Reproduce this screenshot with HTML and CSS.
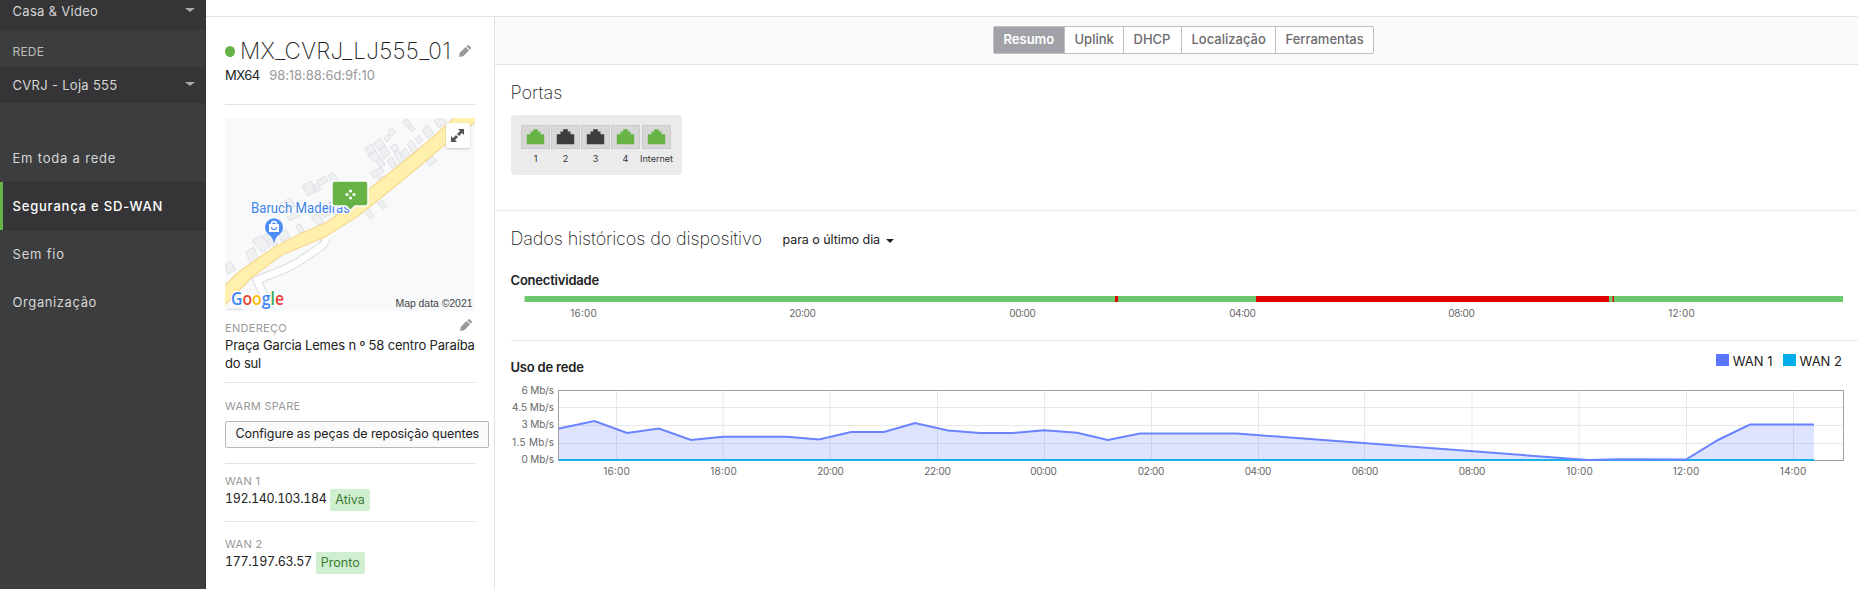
FILE: index.html
```html
<!DOCTYPE html>
<html lang="pt-BR">
<head>
<meta charset="utf-8">
<title>MX_CVRJ_LJ555_01</title>
<link rel="stylesheet" href="styles.css">
</head>
<body>
<div class="app">
  <nav class="sidebar">
    <div class="picker picker-org"><span class="t-org">Casa &amp; Video</span><i class="caret"></i></div>
    <div class="side-label"><span class="t-rede">REDE</span></div>
    <div class="picker picker-net"><span class="t-net">CVRJ - Loja 555</span><i class="caret"></i></div>
    <div class="menu">
      <a class="item"><span class="t-m1">Em toda a rede</span></a>
      <a class="item active"><span class="t-m2">Segurança e SD-WAN</span></a>
      <a class="item"><span class="t-m3">Sem fio</span></a>
      <a class="item"><span class="t-m4">Organização</span></a>
    </div>
  </nav>
  <div class="page">
    <div class="topbar"></div>
    <div class="content">
      <aside class="device">
        <section class="head">
          <div class="title-row">
            <i class="status"></i><h1 class="t-title">MX_CVRJ_LJ555_01</h1>
            <svg class="pencil" viewBox="0 0 12 12"><path d="M0 12l.8-4.200L6.600 2l3.400 3.400-5.800 5.800zM7.300 1.300L8.300.4q.9-.7 1.700 0l1.600 1.600q.7.8 0 1.700l-.9 1z"/></svg>
          </div>
          <div class="model"><span class="t-model">MX64</span><span class="t-mac">98:18:88:6d:9f:10</span></div>
        </section>
        <svg class="map" viewBox="0 0 250 193">
          <rect width="250" height="193" fill="#f8f9fb"/>
          <g fill="#eff0f2" stroke="#dfe1e4" stroke-width="1">
            <path d="M77 68l9-5 6 9-9 6zM87 68l5-3 4 6-5 4zM92 63l8-5 3 5-8 5zM103 58l5-4 5 8-5 3zM55 86l10-6 5 8-8 8zM62 99l10-5 3 4-10 5zM71 108l4-2 5 9-4 2zM27 123l9-6 9 11-8 6zM37 119l7-5 9 12-4 3zM54 116l7-5 4 8-8 5zM21 134l8-5 5 14-9 2zM0 147l5-4 6 8-8 5zM86 100l7-5 6 9-6 3zM93 91l7-5 6 10-7 4zM103 86l7-6 8 10-8 7zM137 91l5-3 7 10-4 3zM152 85l5-3 5 6-4 3zM200 41l6-4 6 6-8 5zM3 191h14v4H3z"/>
            <path d="M140 30l7-4 4 7-7 4zM149 25l6-5 5 8-6 5zM143 37l7-5 5 7-6 5zM151 44l5-4 4 7-4 3zM154 32l6-4 5 8-6 5zM145 55l11-6 3 5-10 6zM153 60l4-2 3 3-5 3zM162 43l5-4 5 8-5 3zM169 35l4-3 7 11-5 3zM176 34l4-4 6 8-4 3zM165 29l6-3 3 4-5 4zM159 20l4-4 3 4-4 4zM163 13l4-4 4 5-5 4zM178 4l4-3 4 5-4 3zM183 10l3-3 4 4-3 3zM182 26l4-4 7 9-5 4zM190 21l4-4 4 6-4 3zM197 12l6-5 6 9-6 4zM209 3l6-4 7 5-8 6z"/>
          </g>
          <path d="M101 119q-1 6-4 9L75 143 60 151 32 162l15 34" fill="none" stroke="#dfe1e4" stroke-width="9"/>
          <path d="M102 116q-1 9-5 12L75 143 60 151 32 162l15 34" fill="none" stroke="#fff" stroke-width="6.500"/>
          <path d="M-2 169L15 153l17-12 16-11 29-15 23-10 23-15 20-18 34-27 30-25L230-1h22v4L223 24l-33 28-33 27-24 19-33 21-43 18-30 22-29 30z" fill="#fff0ae" stroke="#f7d88e" stroke-width="1.200"/>
          <text class="poi" x="26" y="95" textLength="99" lengthAdjust="spacingAndGlyphs">Baruch Madeiras</text>
          <path d="M49 126q-1-7-6-10a9 9 0 1 1 12 0q-5 3-6 10z" fill="#4f8df5"/>
          <path d="M44 106h10v8H44z" fill="#fff"/><path d="M46.500 106a2.500 2.500 0 0 1 5 0" fill="none" stroke="#fff" stroke-width="1.300"/><path d="M46.500 109a2.500 2.500 0 0 0 5 0" fill="none" stroke="#4f8df5" stroke-width="1.200"/>
          <path d="M109.500 63h31q2.500 0 2.500 2.500v20q0 2.500-2.500 2.500H130l-4.500 4.500L121 88h-11.500q-2.500 0-2.500-2.500v-20q0-2.500 2.500-2.500z" fill="#67b346" stroke="#fff" stroke-width="1.500"/>
          <g fill="#fff"><circle cx="125.500" cy="73" r="1.600"/><circle cx="125.500" cy="80" r="1.600"/><circle cx="122" cy="76.500" r="1.600"/><circle cx="129" cy="76.500" r="1.600"/></g>
          <g class="expand"><rect x="221" y="5" width="24" height="25" rx="2.500" fill="#fff"/></g>
          <path d="M233 11h6v6l-2-2-3 3-2-2 3-3zM226 18l2 2 3-3 2 2-3 3 2 2h-6z" fill="#555"/>
          <text class="google" x="6" y="187" textLength="53" lengthAdjust="spacingAndGlyphs"><tspan fill="#4285f4">G</tspan><tspan fill="#ea4335">o</tspan><tspan fill="#fbbc05">o</tspan><tspan fill="#4285f4">g</tspan><tspan fill="#34a853">l</tspan><tspan fill="#ea4335">e</tspan></text>
          <text class="copy" x="170.500" y="189" textLength="77">Map data ©2021</text>
        </svg>
        <section class="address">
          <div class="label-row"><span class="label t-end">ENDEREÇO</span>
          <svg class="pencil" viewBox="0 0 12 12"><path d="M0 12l.8-4.200L6.600 2l3.400 3.400-5.800 5.800zM7.300 1.300L8.300.4q.9-.7 1.700 0l1.600 1.600q.7.8 0 1.700l-.9 1z"/></svg></div>
          <div class="addr"><span class="t-ad1">Praça Garcia Lemes n º 58 centro Paraíba</span><br><span class="t-ad2">do sul</span></div>
        </section>
        <section class="spare"><div class="label"><span class="t-warm">WARM SPARE</span></div><button class="config"><span class="t-conf">Configure as peças de reposição quentes</span></button></section>
        <section class="wan wan-one"><div class="label"><span class="t-w1">WAN 1</span></div><div class="ip"><span class="t-ip1">192.140.103.184</span><span class="badge b1"><span class="t-at">Ativa</span></span></div></section>
        <section class="wan wan-two"><div class="label"><span class="t-w2">WAN 2</span></div><div class="ip"><span class="t-ip2">177.197.63.57</span><span class="badge b2"><span class="t-pr">Pronto</span></span></div></section>
      </aside>
      <main class="main">
        <div class="tabbar"><div class="tabs">
          <a class="tab tab1 on"><span class="t-t1">Resumo</span></a><a class="tab tab2"><span class="t-t2">Uplink</span></a><a class="tab tab3"><span class="t-t3">DHCP</span></a><a class="tab tab4"><span class="t-t4">Localização</span></a><a class="tab tab5"><span class="t-t5">Ferramentas</span></a>
        </div></div>
        <section class="ports">
          <h2><span class="t-portas">Portas</span></h2>
          <div class="switch">
            <div class="port up"><svg viewBox="0 0 29 24"><path d="M5 9h4V6h3V3.500h5V6h3v3h4v11H5z"/></svg><span>1</span></div>
            <div class="port"><svg viewBox="0 0 29 24"><path d="M5 9h4V6h3V3.500h5V6h3v3h4v11H5z"/></svg><span>2</span></div>
            <div class="port"><svg viewBox="0 0 29 24"><path d="M5 9h4V6h3V3.500h5V6h3v3h4v11H5z"/></svg><span>3</span></div>
            <div class="port up"><svg viewBox="0 0 29 24"><path d="M5 9h4V6h3V3.500h5V6h3v3h4v11H5z"/></svg><span>4</span></div>
            <div class="port up uplink"><svg viewBox="0 0 29 24"><path d="M5 9h4V6h3V3.500h5V6h3v3h4v11H5z"/></svg><span>Internet</span></div>
          </div>
        </section>
        <section class="history">
          <div class="hist-head"><h2><span class="t-hist">Dados históricos do dispositivo</span></h2><span class="range"><span class="t-range">para o último dia</span><i class="caret dark"></i></span></div>
          <div class="connect">
            <h3><span class="t-con">Conectividade</span></h3>
            <svg class="conn" viewBox="511 292 1347 30">
              <rect x="524.500" y="296" width="1318.500" height="6" fill="#6dc86d"/>
              <path d="M1115 296h3v6h-3zM1256 296h353v6h-353zM1612.500 296h1.500v6h-1.500z" fill="#e00000"/>
              <g class="axis" text-anchor="middle"><text x="583.500" y="317" textLength="26.500">16:00</text><text x="802.500" y="317" textLength="26.500">20:00</text><text x="1022.500" y="317" textLength="26.500">00:00</text><text x="1242.500" y="317" textLength="26.500">04:00</text><text x="1461.500" y="317" textLength="26.500">08:00</text><text x="1681.500" y="317" textLength="26.500">12:00</text></g>
            </svg>
          </div>
          <div class="usage">
            <div class="usage-head"><h3><span class="t-uso">Uso de rede</span></h3>
              <div class="legend"><i class="key k1"></i><span class="t-l1">WAN 1</span><i class="key k2"></i><span class="t-l2">WAN 2</span></div></div>
            <svg class="chart" viewBox="511 380 1347 105">
              <path d="M559 407.500h1284M559 425.500h1284M559 443.500h1284M616.500 390v70M723 390v70M830 390v70M937.500 390v70M1044.500 390v70M1151.500 390v70M1258.500 390v70M1364.500 390v70M1472 390v70M1579 390v70M1686.500 390v70M1793.500 390v70" stroke="#e7e7e7" fill="none"/>
              <path d="M558 390.500h1286M558.500 390v71M558 460.500h1286M1843.500 390v71" stroke="#a0a0a0" fill="none"/>
              <path d="M559 428.500L594.500 421 627 433l32-4.500 32 11.500 32-3.200h64l32 2.700 32-7.500h33l31-9 33 7.500 32 2.500h33l31-2.800 33 2.600 31 7.200 32-6.500h97L1588 460l32-.7 66 .2 32-19.500 32-15.500h64V460H559z" fill="#5c77ff" fill-opacity=".2"/>
              <path d="M559 460h1255" stroke="#19afe8" stroke-width="2"/>
              <path d="M559 428.500L594.500 421 627 433l32-4.500 32 11.500 32-3.200h64l32 2.700 32-7.500h33l31-9 33 7.500 32 2.500h33l31-2.800 33 2.600 31 7.200 32-6.500h97L1588 460l32-.7 66 .2 32-19.500 32-15.500h64" fill="none" stroke="#6b83ff" stroke-width="2"/>
              <g class="axis" text-anchor="end"><text x="554" y="394" textLength="32.500">6 Mb/s</text><text x="554" y="411" textLength="42">4.5 Mb/s</text><text x="554" y="428" textLength="32.500">3 Mb/s</text><text x="554" y="446" textLength="42">1.5 Mb/s</text><text x="554" y="463" textLength="32.500">0 Mb/s</text></g>
              <g class="axis" text-anchor="middle"><text x="616.500" y="475" textLength="26.500">16:00</text><text x="723.500" y="475" textLength="26.500">18:00</text><text x="830.500" y="475" textLength="26.500">20:00</text><text x="937.500" y="475" textLength="26.500">22:00</text><text x="1043.500" y="475" textLength="26.500">00:00</text><text x="1151" y="475" textLength="26.500">02:00</text><text x="1258" y="475" textLength="26.500">04:00</text><text x="1365" y="475" textLength="26.500">06:00</text><text x="1472" y="475" textLength="26.500">08:00</text><text x="1579.500" y="475" textLength="26.500">10:00</text><text x="1686" y="475" textLength="26.500">12:00</text><text x="1793" y="475" textLength="26.500">14:00</text></g>
            </svg>
          </div>
        </section>
      </main>
    </div>
  </div>
</div>
</body>
</html>
```
FILE: styles.css
```css
* { box-sizing: border-box; }
body { margin: 0; background: #fff; color: #222; font: 13px/18px Inter, "Liberation Sans", sans-serif; overflow: hidden; }
h1, h2, h3 { margin: 0; }
span { white-space: nowrap; }
svg { display: block; }
.app { display: flex; height: 589px; }

.sidebar { width: 206px; flex: none; background: #3c3d3f; color: #d6d6d6; border-right: 1px solid #333436; }
.picker { background: #353537; display: flex; justify-content: space-between; padding: 0 10px 0 12.5px; letter-spacing: .3px; }
.picker-org { height: 30px; padding-top: 2px; }
.picker-net { height: 36px; padding-top: 9px; }
.caret { width: 0; height: 0; border: 5px solid transparent; border-top: 4.5px solid #aaa; border-bottom: 0; margin-top: 6px; }
.side-label { height: 37px; padding: 13px 12.5px 0; font-size: 12px; letter-spacing: .2px; color: #bcbcbc; }
.menu { padding-top: 31px; }
.item { display: block; height: 48px; padding: 15px 12.5px 0; letter-spacing: .8px; }
.t-m4 { letter-spacing: .6px; }
.active { background: #353537; color: #fff; border-left: 3px solid #67b346; padding-left: 9.5px; box-shadow: inset 0 1px #303032, inset 0 -1px #303032; font-weight: 500; letter-spacing: .8px; }

.page { flex: 1; display: flex; flex-direction: column; min-width: 0; }
.topbar { height: 17px; border-bottom: 1px solid #e2e2e3; }
.content { flex: 1; display: flex; }
.device { width: 289px; flex: none; border-right: 1px solid #e2e2e3; padding-left: 19px; }
.head { width: 250px; height: 88px; border-bottom: 1px solid #e2e2e3; padding-top: 20px; }
.title-row { display: flex; align-items: center; height: 28px; }
.status { width: 10px; height: 11px; border-radius: 50%; background: #67b346; margin-top: 1px; }
h1 { font-size: 22.5px; line-height: 28px; font-weight: 200; margin-left: 5px; width: 213px; letter-spacing: .3px; }
.pencil { width: 12px; height: 12px; fill: #999; margin-left: 6px; }
.model { height: 20px; display: flex; gap: 9.5px; padding-top: 1px; }
.t-model { letter-spacing: -.5px; }
.t-mac { color: #999; letter-spacing: -.05px; }
.map { width: 250px; height: 193px; margin-top: 13px; }
.poi { font: 14px Roboto, sans-serif; fill: #3d82e8; paint-order: stroke; stroke: #fff; stroke-width: 2px; }
.google { font: 600 18px "Open Sans", sans-serif; paint-order: stroke; stroke: #fff; stroke-width: 2px; }
.copy { font: 10.5px "Liberation Sans", sans-serif; fill: #444; }
.expand { filter: drop-shadow(0 1px 1px rgba(0,0,0,.2)); }
.label { font-size: 11px; line-height: 18px; color: #999; letter-spacing: .3px; }
.address { width: 250px; height: 72px; border-bottom: 1px solid #e2e2e3; padding-top: 8px; }
.label-row { display: flex; justify-content: space-between; height: 17px; padding-right: 3px; }
.addr { line-height: 18px; letter-spacing: -.17px; }
.spare { width: 250px; height: 81px; border-bottom: 1px solid #e2e2e3; padding-top: 14px; }
.config { font: inherit; font-size: 12.5px; letter-spacing: -.07px; color: #222; background: #fafafa; border: 1px solid #b8b8b8; border-radius: 2px; height: 27px; width: 264px; padding: 0 0 1px 9.5px; text-align: left; margin-top: 6px; display: block; }
.wan-one { width: 250px; height: 58px; border-bottom: 1px solid #e2e2e3; padding-top: 8px; }
.wan-two { padding-top: 13px; }
.ip { display: flex; height: 22px; line-height: 20px; font-variant-numeric: tabular-nums; margin-top: -1px; }
.t-ip1, .t-ip2 { font-size: 12.5px; letter-spacing: -.4px; }
.t-ip2 { letter-spacing: -.33px; }
.badge { background: #d0efd1; color: #3a7a32; border-radius: 2px; height: 22px; line-height: 21px; padding: 0 5px; margin-left: 4px; font-size: 12.5px; }

.main { flex: 1; min-width: 0; }
.tabbar { height: 48px; background: #fafafa; border-bottom: 1px solid #e2e2e3; padding: 9px 0 0 498px; }
.tabs { display: flex; width: 381px; height: 28px; border: 1px solid #bfbfbf; border-radius: 2px; background: #fff; color: #6b6b6e; font-weight: 500; line-height: 25px; }
.tab { padding-left: 9.5px; border-right: 1px solid #bfbfbf; }
.tab1 { width: 71px; } .tab2 { width: 59px; } .tab3 { width: 58px; } .tab4 { width: 94px; }
.tab5 { flex: 1; border: 0; }
.on { background: #a1a2a7; color: #fff; font-weight: 600; }
.ports { height: 146px; border-bottom: 1px solid #ebebeb; padding: 15px 0 0 16px; }
h2 { font-size: 18px; line-height: 26px; font-weight: 200; margin-left: -.5px; }
.t-hist { letter-spacing: -.12px; }
.switch { display: flex; gap: 1px; width: 171px; height: 60px; margin-top: 9px; background: #ebebeb; border-radius: 4px; padding: 10px; }
.port { width: 29px; text-align: center; font-size: 9px; line-height: 13px; color: #333; display: flex; flex-direction: column; align-items: center; gap: 3px; }
.port svg { width: 29px; height: 24px; background: #d7d7d8; border: 1px solid #cbcbcd; fill: #3c3d3f; }
.up svg { fill: #67b346; }
.uplink { margin-left: 1px; }
.history { padding-left: 16px; }
.hist-head { display: flex; padding-top: 15px; height: 57px; }
.hist-head h2 { width: 251px; }
.range { display: flex; margin: 5px 0 0 21px; font-size: 12.5px; letter-spacing: -.05px; }
.dark { border-width: 4px 4px 0; border-top-color: #222; margin: 8px 0 0 6px; }
.connect { height: 73px; border-bottom: 1px solid #ebebeb; }
h3 { font-size: 13px; line-height: 24px; font-weight: 600; letter-spacing: -.2px; margin-left: -.5px; }
.conn { width: 1347px; height: 30px; }
.usage-head { display: flex; justify-content: space-between; height: 39px; padding-top: 14px; }
.legend { display: flex; margin-top: -3px; padding-right: 16px; line-height: 18px; }
.key { width: 13px; height: 12px; margin: 2px 4px 0 0; background: #5c77ff; }
.k2 { background: #00aeeb; margin-left: 10px; }
.chart { width: 1347px; height: 105px; }
.axis { font: 10px Inter, sans-serif; fill: #666; }
```
